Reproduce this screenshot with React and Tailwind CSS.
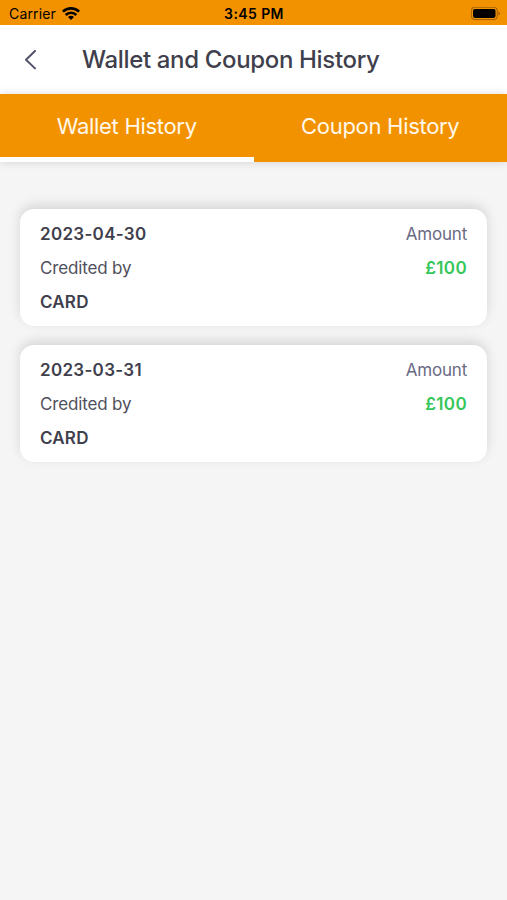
const entries = [
  { id: 1, date: "2023-04-30", method: "CARD", amount: "£100" },
  { id: 2, date: "2023-03-31", method: "CARD", amount: "£100" },
];

const StatusBar = () => (
  <div className="grid h-[25px] grid-cols-3 items-center bg-[#f39200] pt-0.5 text-black">
    <div className="flex items-center gap-1.5 pl-[9px]">
      <span className="text-[14px] tracking-[0.15px]">Carrier</span>
      <svg width="18" height="13" viewBox="0 0 18 13" fill="none" stroke="currentColor" strokeWidth="2.6">
        <path d="M0.9 4.7a11.5 11.5 0 0 1 16.2 0" />
        <path d="M3.7 8a7.5 7.5 0 0 1 10.6 0" />
        <path d="M9 13L6 9.9a4.2 4.2 0 0 1 6 0z" fill="currentColor" stroke="none" />
      </svg>
    </div>
    <span className="pl-px text-center text-[14px] font-semibold tracking-[0.4px]">3:45 PM</span>
    <div className="flex justify-end pr-[6px]">
      <svg width="30" height="14" viewBox="0 0 30 14">
        <rect x="0.3" y="0.2" width="26" height="12.4" rx="3.5" fill="none" stroke="#000" strokeOpacity="0.35" />
        <rect x="2" y="1.9" width="22.5" height="9" rx="1.8" />
        <path d="M27.5 4.4c1.8.8 1.8 3.2 0 4z" fillOpacity="0.4" />
      </svg>
    </div>
  </div>
);

const Header = () => (
  <header className="flex h-[69px] items-center bg-white">
    <button className="ml-6 w-[58px]" aria-label="Back">
      <svg width="13" height="20" viewBox="0 0 13 20" fill="none" stroke="#51516a" strokeWidth="2" strokeLinecap="round" strokeLinejoin="round">
        <path d="M11 1L2 9.7l9 8.7" />
      </svg>
    </button>
    <h1 className="text-[24px] font-medium tracking-[-0.34px]">Wallet and Coupon History</h1>
  </header>
);

const Tabs = () => (
  <nav className="grid h-[68px] grid-cols-2 bg-[#f39200] text-[22px] tracking-[-0.3px] text-[#fff8ea] shadow-[0_0_9px_rgba(0,0,0,0.14)]">
    <button className="border-b-[5px] border-white pt-px">Wallet History</button>
    <button className="border-b-[5px] border-transparent pt-px">Coupon History</button>
  </nav>
);

const HistoryCard = ({ entry }) => (
  <div className="flex h-[117px] justify-between rounded-[14px] bg-white px-5 pt-2 text-[17px] leading-[34px] shadow-[0_-4px_12px_rgba(0,0,0,0.13)]">
    <div>
      <p className="font-semibold tracking-[0.3px]">{entry.date}</p>
      <p className="tracking-[-0.15px] text-[#50505c]">Credited by</p>
      <p className="font-semibold tracking-[0.2px]">{entry.method}</p>
    </div>
    <div className="text-right">
      <p className="tracking-[-0.2px] text-[#6b6b84]">Amount</p>
      <p className="font-semibold tracking-[0.35px] text-[#35c759]">{entry.amount}</p>
    </div>
  </div>
);

const App = () => {
  return (
    <div className="min-h-screen bg-[#f5f5f5] font-['Inter',sans-serif] text-[#3f3f4d]">
      <StatusBar />
      <Header />
      <Tabs />
      <main className="flex flex-col gap-[19.7px] px-5 pt-[46.6px]">
        {entries.map((entry) => (
          <HistoryCard key={entry.id} entry={entry} />
        ))}
      </main>
    </div>
  );
};

export default App;
